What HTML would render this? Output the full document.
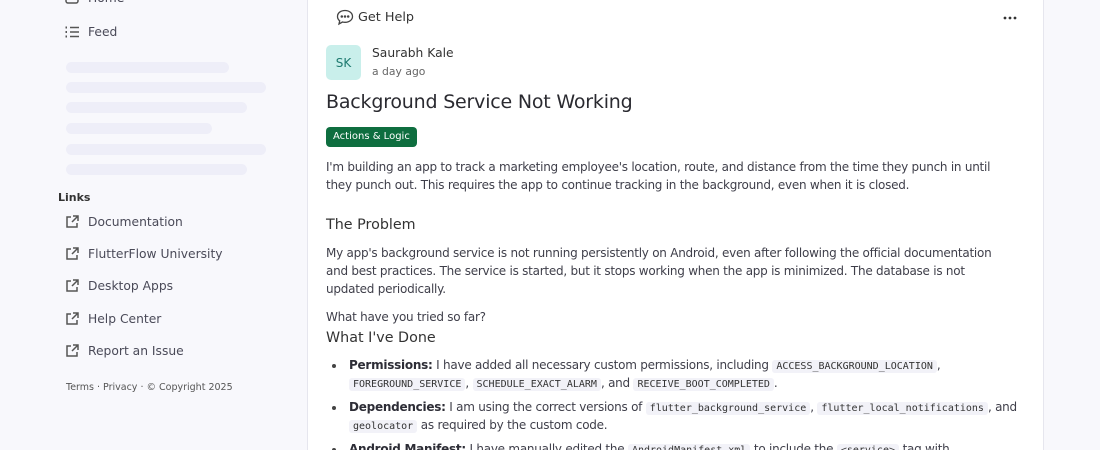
<!DOCTYPE html>
<html style="height:450px;overflow:hidden"><head><style>
*{box-sizing:border-box;margin:0;padding:0}
body{width:1100px;height:450px;overflow:hidden;background:#f8f8fc;font-family:"DejaVu Sans","Liberation Sans",sans-serif;color:#3f3f4a}
#w{position:relative;width:1100px;height:450px;overflow:hidden}
.side a{position:absolute;left:64px;font-size:12.3px;color:#4a4a58;display:flex;align-items:center;gap:8px;text-decoration:none}
.sk{position:absolute;left:66px;height:11px;background:#eeeef8;border-radius:6px}
.card{position:absolute;left:307px;top:-10px;width:737px;height:480px;background:#fff;border:1px solid #e6e6ee;border-radius:6px}
.c{position:absolute;left:326px;width:690px}
p{font-size:12px;line-height:18px;letter-spacing:-0.25px}
code{font-family:"DejaVu Sans Mono",monospace;font-size:10px;line-height:1;background:#f2f2f8;border-radius:3px;padding:1px 4px;color:#333;letter-spacing:0}
ul{list-style:none}
li{position:relative;padding-left:23px;font-size:12px;line-height:18px;margin-bottom:6px;letter-spacing:-0.25px}
li:before{content:"";position:absolute;left:6px;top:8px;width:4px;height:4px;border-radius:50%;background:#444}
b{color:#2d2d36}
</style></head><body><div id="w">
<div class="side">
<a style="top:-10px"><svg width="16" height="16" viewBox="0 0 16 16"><rect x="2" y="1" width="12" height="12" rx="2" fill="none" stroke="#555" stroke-width="1.5"/></svg>Home</a>
<a style="top:24px"><svg width="16" height="16" viewBox="0 0 16 16" stroke="#555" stroke-width="1.5"><path d="M6 3.5h9M6 8h9M6 12.5h9"/><path d="M1.5 3.5h1.5M1.5 8h1.5M1.5 12.5h1.5" stroke-width="2"/></svg>Feed</a>
<div class="sk" style="top:62px;width:163px"></div>
<div class="sk" style="top:82px;width:200px"></div>
<div class="sk" style="top:102px;width:181px"></div>
<div class="sk" style="top:123px;width:146px"></div>
<div class="sk" style="top:144px;width:200px"></div>
<div class="sk" style="top:164px;width:181px"></div>
<div style="position:absolute;left:58px;top:191px;font-size:11px;font-weight:bold;color:#333">Links</div>
<a style="top:214px"><svg width="16" height="16" viewBox="0 0 16 16" fill="none" stroke="#555" stroke-width="1.5"><path d="M7 3H3v10h10V9M9 2h5v5M14 2L8 8"/></svg>Documentation</a>
<a style="top:246px"><svg width="16" height="16" viewBox="0 0 16 16" fill="none" stroke="#555" stroke-width="1.5"><path d="M7 3H3v10h10V9M9 2h5v5M14 2L8 8"/></svg>FlutterFlow University</a>
<a style="top:278px"><svg width="16" height="16" viewBox="0 0 16 16" fill="none" stroke="#555" stroke-width="1.5"><path d="M7 3H3v10h10V9M9 2h5v5M14 2L8 8"/></svg>Desktop Apps</a>
<a style="top:311px"><svg width="16" height="16" viewBox="0 0 16 16" fill="none" stroke="#555" stroke-width="1.5"><path d="M7 3H3v10h10V9M9 2h5v5M14 2L8 8"/></svg>Help Center</a>
<a style="top:343px"><svg width="16" height="16" viewBox="0 0 16 16" fill="none" stroke="#555" stroke-width="1.5"><path d="M7 3H3v10h10V9M9 2h5v5M14 2L8 8"/></svg>Report an Issue</a>
<div style="position:absolute;left:66px;top:382px;font-size:9.5px;color:#555">Terms · Privacy · © Copyright 2025</div>
</div>
<div class="card"></div>
<div style="position:absolute;left:336px;top:9px;font-size:12.8px;color:#333;display:flex;align-items:center;gap:4px"><svg width="18" height="17" viewBox="0 0 18 17" fill="none" stroke="#444" stroke-width="1.3"><path d="M9 1.5C4.6 1.5 1.5 4 1.5 7.5c0 1.8.8 3.3 2.2 4.3L3 15l3.5-2c.8.2 1.6.3 2.5.3 4.4 0 7.5-2.6 7.5-5.8S13.4 1.5 9 1.5z"/><circle cx="5.8" cy="7.5" r=".6" fill="#444"/><circle cx="9" cy="7.5" r=".6" fill="#444"/><circle cx="12.2" cy="7.5" r=".6" fill="#444"/></svg>Get Help</div>
<svg style="position:absolute;left:1003px;top:16px" width="14" height="4"><circle cx="2" cy="2" r="1.4" fill="#333"/><circle cx="7" cy="2" r="1.4" fill="#333"/><circle cx="12" cy="2" r="1.4" fill="#333"/></svg>
<div style="position:absolute;left:326px;top:45px;width:35px;height:35px;border-radius:5px;background:#c9efeb;color:#1e7a70;font-size:12px;display:flex;align-items:center;justify-content:center">SK</div>
<div style="position:absolute;left:372px;top:46px;font-size:12.3px;color:#333">Saurabh Kale</div>
<div style="position:absolute;left:372px;top:65px;font-size:10.8px;color:#666">a day ago</div>
<div class="c" style="top:91px;font-size:19px;color:#2a2a30;letter-spacing:-0.2px">Background Service Not Working</div>
<div style="position:absolute;left:326px;top:127px;height:20px;padding:0 7px;background:#0e6e3f;color:#fff;border-radius:4px;font-size:10px;line-height:20px">Actions &amp; Logic</div>
<p class="c" style="top:158px">I'm building an app to track a marketing employee's location, route, and distance from the time they punch in until they punch out. This requires the app to continue tracking in the background, even when it is closed.</p>
<div class="c" style="top:217px;font-size:14.3px;color:#333">The Problem</div>
<p class="c" style="top:244px">My app's background service is not running persistently on Android, even after following the official documentation and best practices. The service is started, but it stops working when the app is minimized. The database is not updated periodically.</p>
<p class="c" style="top:308px">What have you tried so far?</p>
<div class="c" style="top:330px;font-size:14.3px;color:#333">What I've Done</div>
<ul class="c" style="top:356px;width:700px">
<li><b>Permissions:</b> I have added all necessary custom permissions, including <code>ACCESS_BACKGROUND_LOCATION</code>, <code>FOREGROUND_SERVICE</code>, <code>SCHEDULE_EXACT_ALARM</code>, and <code>RECEIVE_BOOT_COMPLETED</code>.</li>
<li><b>Dependencies:</b> I am using the correct versions of <code>flutter_background_service</code>, <code>flutter_local_notifications</code>, and <code>geolocator</code> as required by the custom code.</li>
<li><b>Android Manifest:</b> I have manually edited the <code>AndroidManifest.xml</code> to include the <code>&lt;service&gt;</code> tag with</li>
</ul>
</div></body></html>
